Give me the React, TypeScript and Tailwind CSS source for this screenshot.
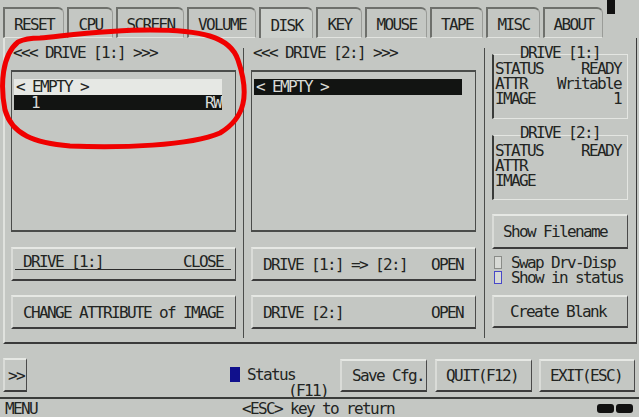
import React from "react";

const tabs = [
  { label: "RESET", cls: "w-[61px]" },
  { label: "CPU", cls: "w-[46px]" },
  { label: "SCREEN", cls: "w-[68px]" },
  { label: "VOLUME", cls: "w-[69px]" },
  { label: "DISK", cls: "w-[54px]", sel: true },
  { label: "KEY", cls: "w-[46px]" },
  { label: "MOUSE", cls: "w-[62px]" },
  { label: "TAPE", cls: "w-[53px]" },
  { label: "MISC", cls: "w-[54px]" },
  { label: "ABOUT", cls: "w-[60px]" },
];

function Btn({ className = "", children }: { className?: string; children: React.ReactNode }) {
  return (
    <div
      className={
        "flex border-t-2 border-l-2 border-t-[#e6e8e4] border-l-[#dadcd8] border-b-2 border-b-[#3c3c3c] border-r border-r-[#4a4a4a] " +
        className
      }
    >
      {children}
    </div>
  );
}

function Row({ l, r }: { l: string; r?: string }) {
  return (
    <div className="flex justify-between h-[15px] pl-[1px] pr-[6px]">
      <span>{l}</span>
      <span>{r}</span>
    </div>
  );
}

export default function App() {
  return (
    <div className="w-[639px] h-[417px] overflow-hidden bg-[#c4c7c3] text-[#222422] font-['DejaVu_Sans_Mono',monospace] text-[16px] leading-[15px] tracking-[-1.63px] flex flex-col relative">
      {/* tabs */}
      <div className="h-[38px] flex items-end gap-[3px] pl-[3px] shrink-0">
        {tabs.map((t) => (
          <div
            key={t.label}
            className={
              "h-[31px] flex items-center justify-center pt-[3px] border-t-2 border-l-2 border-r border-t-[#6e706c] border-l-[#6e706c] border-r-[#9a9c98] rounded-tr-[6px] " +
              t.cls +
              (t.sel ? " bg-[#ccd0cc]" : " border-b border-b-[#e2e4e0]")
            }
          >
            {t.label}
          </div>
        ))}
      </div>
      <div className="absolute left-[607px] top-0 w-[8px] h-[14px] bg-[#111]" />

      {/* main frame */}
      <div className="ml-[3px] w-[634px] h-[306px] shrink-0 flex border-l-2 border-l-[#e0e2de] border-b-2 border-b-[#3a3a3a] border-r border-r-[#3a3a3a]">
        {/* left column */}
        <div className="w-[238px] pl-[6px] pr-[7px] pt-[7px] flex flex-col">
          <div className="h-[15px] pl-[2px]">{"<<< DRIVE [1:] >>>"}</div>
          <div className="mt-[10px] h-[162px] border-t-2 border-b-2 border-l border-r border-[#4a4c4a] pt-[7px] pl-[2px]">
            <div className="w-[208px] h-[16px] bg-[#e6e8e4] pl-[2px]">{"< EMPTY >"}</div>
            <div className="w-[208px] h-[15px] bg-[#121412] text-[#d8dad6] flex justify-between pl-[17px] pr-[1px]">
              <span>1</span>
              <span>RW</span>
            </div>
          </div>
          <Btn className="mt-[15px] h-[34px] flex-col">
            <div className="mt-[5px] ml-[2px] mr-[4px] h-[16px] border-b border-b-[#2a2a2a] flex justify-between px-[8px]">
              <span>DRIVE [1:]</span>
              <span>CLOSE</span>
            </div>
          </Btn>
          <Btn className="mt-[14px] h-[34px] items-center pl-[10px]">
            <span>CHANGE ATTRIBUTE of IMAGE</span>
          </Btn>
        </div>
        <div className="w-px bg-[#4a4c4a] mt-[10px] mb-[4px]" />
        {/* middle column */}
        <div className="w-[240px] pl-[7px] pr-[8px] pt-[7px] flex flex-col">
          <div className="h-[15px] pl-[2px]">{"<<< DRIVE [2:] >>>"}</div>
          <div className="mt-[10px] h-[162px] border-t-2 border-b-2 border-l border-r border-[#4a4c4a] pt-[7px] pl-[2px]">
            <div className="w-[208px] h-[16px] bg-[#121412] text-[#d8dad6] pl-[2px]">{"< EMPTY >"}</div>
          </div>
          <Btn className="mt-[15px] h-[34px] items-center justify-between pl-[10px] pr-[12px]">
            <span>{"DRIVE [1:] => [2:]"}</span>
            <span>OPEN</span>
          </Btn>
          <Btn className="mt-[14px] h-[34px] items-center justify-between pl-[10px] pr-[12px]">
            <span>DRIVE [2:]</span>
            <span>OPEN</span>
          </Btn>
        </div>
        <div className="w-px bg-[#4a4c4a] mt-[10px] mb-[4px]" />
        {/* right column */}
        <div className="w-[151px] pl-[7px] pr-[8px] pt-[7px] flex flex-col">
          <div className="h-[15px] text-center relative z-10 -mb-[6px]">DRIVE [1:]</div>
          <div className="border-t border-r border-b border-[#e4e6e2] border-l-2 border-l-[#3a3c3a] pt-[6px] pb-[12px]">
            <Row l="STATUS" r="READY" />
            <Row l="ATTR" r="Writable" />
            <Row l="IMAGE" r="1" />
          </div>
          <div className="h-[15px] mt-[6px] text-center relative z-10 -mb-[5px]">DRIVE [2:]</div>
          <div className="border-t border-r border-b border-[#e4e6e2] border-l-2 border-l-[#3a3c3a] pt-[7px] pb-[11px]">
            <Row l="STATUS" r="READY" />
            <Row l="ATTR" />
            <Row l="IMAGE" />
          </div>
          <Btn className="mt-[14px] h-[35px] items-center pl-[9px]">
            <span>Show Filename</span>
          </Btn>
          <div className="mt-[6px] flex flex-col">
            <div className="h-[15px] flex items-center">
              <div className="ml-[2px] w-[8px] h-[13px] border border-[#8a8c88] bg-[#d8dad6]" />
              <span className="ml-[9px]">Swap Drv-Disp</span>
            </div>
            <div className="h-[15px] flex items-center">
              <div className="ml-[2px] w-[8px] h-[13px] border border-[#4848c8] bg-[#d8dad6]" />
              <span className="ml-[9px]">Show in status</span>
            </div>
          </div>
          <Btn className="mt-[10px] h-[33px] items-center pl-[16px]">
            <span>Create Blank</span>
          </Btn>
        </div>
      </div>

      {/* bottom row */}
      <div className="h-[53px] shrink-0 flex items-start">
        <Btn className="ml-[3px] mt-[14px] w-[24px] h-[34px] items-center pl-[3px]">
          <span>{">>"}</span>
        </Btn>
        <div className="ml-[203px] mt-[23px] w-[10px] h-[15px] bg-[#10108c]" />
        <div className="ml-[7px] mt-[23px] w-[85px] flex flex-col">
          <span className="h-[16px]">Status</span>
          <span className="ml-[41px]">(F11)</span>
        </div>
        <Btn className="ml-[8px] mt-[15px] w-[87px] h-[33px] items-center pl-[10px]">
          <span>Save Cfg.</span>
        </Btn>
        <Btn className="ml-[8px] mt-[15px] w-[97px] h-[33px] items-center pl-[9px]">
          <span>QUIT(F12)</span>
        </Btn>
        <Btn className="ml-[7px] mt-[15px] w-[96px] h-[33px] items-center pl-[9px]">
          <span>EXIT(ESC)</span>
        </Btn>
      </div>

      {/* status bar */}
      <div className="flex-1 border-t-2 border-t-[#3a3c3a] flex items-center relative">
        <span className="ml-[5px]">MENU</span>
        <span className="ml-[205px]">{"<ESC> key to return"}</span>
        <div className="ml-auto mr-[6px] flex gap-[2px]">
          <div className="w-[17px] h-[9px] rounded-[3px] bg-[#111]" />
          <div className="w-[17px] h-[9px] rounded-[3px] bg-[#111]" />
        </div>
      </div>

      {/* red annotation */}
      <svg className="absolute left-0 top-0 pointer-events-none" width="639" height="417">
        <path
          d="M40 38 C80 34 110 30 150 30 C200 30 230 36 238 60 C250 95 245 118 220 133 C190 146 120 148 70 146 C35 143 12 135 5 110 C0 85 2 55 18 42 C26 38 33 38 40 38 Z"
          fill="none"
          stroke="#f00000"
          strokeWidth="5"
        />
      </svg>
    </div>
  );
}
